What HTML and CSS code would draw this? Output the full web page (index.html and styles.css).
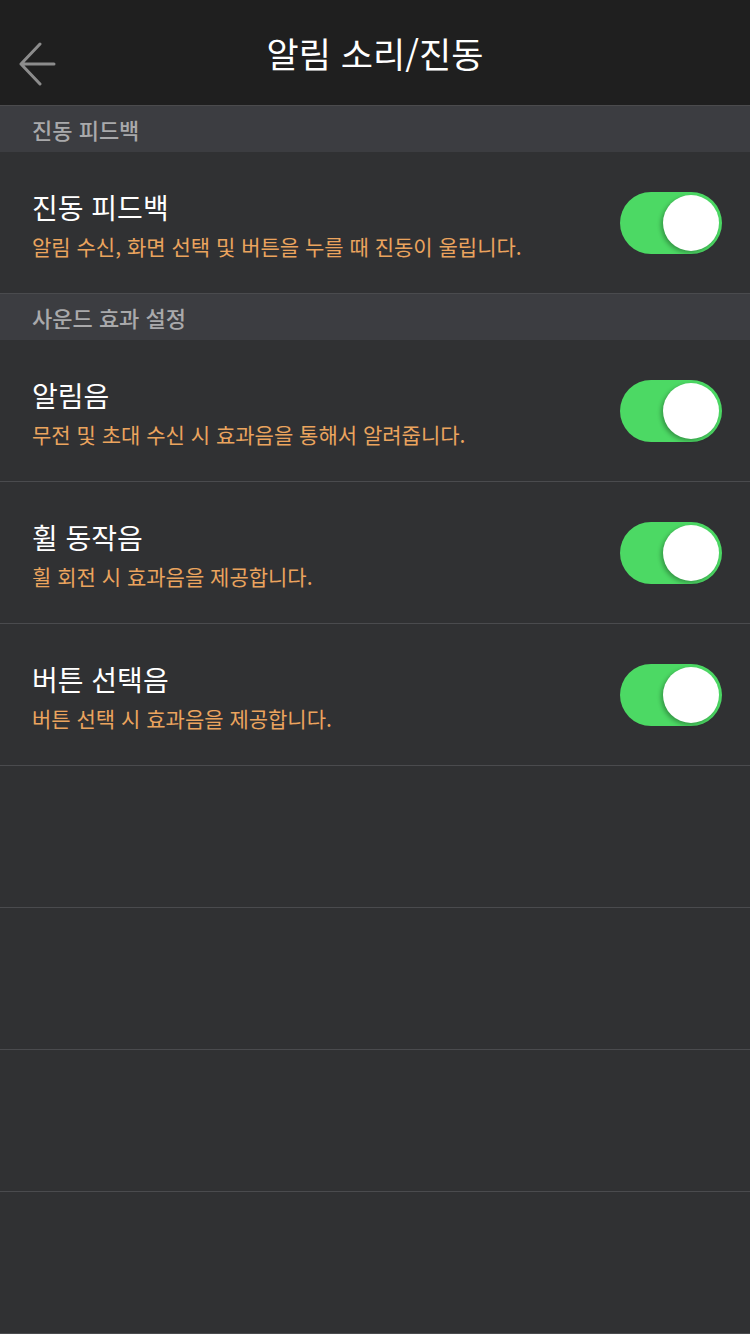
FILE: index.html
```html
<!DOCTYPE html>
<html lang="ko">
<head>
<meta charset="utf-8">
<title>알림 소리/진동</title>
<link rel="stylesheet" href="styles.css">
</head>
<body>
<div class="app">
  <header class="topbar">
    <button class="back" aria-label="뒤로">
      <svg width="40" height="44" viewBox="0 0 40 44"><path d="M22 2 L3 22 L22 42 M3 22 H36" fill="none" stroke="#8c8c8c" stroke-width="3" stroke-linecap="round" stroke-linejoin="round"/></svg>
    </button>
    <h1 class="title">알림 소리/진동</h1>
  </header>

  <div class="section">진동 피드백</div>
  <div class="row">
    <div class="text">
      <div class="name">진동 피드백</div>
      <div class="desc">알림 수신, 화면 선택 및 버튼을 누를 때 진동이 울립니다.</div>
    </div>
    <div class="toggle"><span class="knob"></span></div>
  </div>

  <div class="section">사운드 효과 설정</div>
  <div class="row">
    <div class="text">
      <div class="name">알림음</div>
      <div class="desc">무전 및 초대 수신 시 효과음을 통해서 알려줍니다.</div>
    </div>
    <div class="toggle"><span class="knob"></span></div>
  </div>
  <div class="row">
    <div class="text">
      <div class="name">휠 동작음</div>
      <div class="desc">휠 회전 시 효과음을 제공합니다.</div>
    </div>
    <div class="toggle"><span class="knob"></span></div>
  </div>
  <div class="row">
    <div class="text">
      <div class="name">버튼 선택음</div>
      <div class="desc">버튼 선택 시 효과음을 제공합니다.</div>
    </div>
    <div class="toggle"><span class="knob"></span></div>
  </div>
  <div class="row empty"></div>
  <div class="row empty"></div>
  <div class="row empty"></div>
  <div class="row empty"></div>
</div>
</body>
</html>
```
FILE: styles.css
```css
html, body {
  margin: 0;
  padding: 0;
  background: #303133;
}
body {
  font-family: "Noto Sans CJK KR", "Noto Sans", sans-serif;
  color: #fff;
}
.app {
  width: 750px;
  min-height: 1334px;
  background: #303133;
}
.topbar {
  height: 105px;
  background: #1f1f1f;
  border-bottom: 1px solid #4b4b4d;
  display: flex;
  align-items: center;
  justify-content: center;
  position: relative;
}
.back {
  position: absolute;
  left: 18px;
  top: 42px;
  padding: 0;
  margin: 0;
  border: 0;
  background: none;
  width: 40px;
  height: 44px;
}
.back svg { display: block; }
.title {
  margin: 0;
  font-size: 35px;
  font-weight: 400;
  color: #fff;
  line-height: 1;
}
.section {
  height: 46px;
  background: #3c3d41;
  color: #a9a9ab;
  font-size: 22px;
  font-weight: 500;
  padding-left: 32px;
  display: flex;
  align-items: center;
  line-height: 1;
}
.row {
  height: 141px;
  border-bottom: 1px solid #4a4b4e;
  display: flex;
  align-items: center;
  justify-content: space-between;
  padding: 0 28px 0 32px;
}
.text {
  display: flex;
  flex-direction: column;
  gap: 6px;
  margin-top: 4px;
}
.name {
  font-size: 28px;
  line-height: 36px;
  color: #fff;
}
.desc {
  font-size: 21px;
  line-height: 30px;
  color: #eba45e;
}
.toggle {
  width: 102px;
  height: 62px;
  border-radius: 31px;
  background: #4cd964;
  position: relative;
  flex: none;
}
.knob {
  position: absolute;
  right: 3px;
  top: 3px;
  width: 56px;
  height: 56px;
  border-radius: 50%;
  background: #fff;
  box-shadow: -2px 2px 4px rgba(0,0,0,0.3);
}
```
